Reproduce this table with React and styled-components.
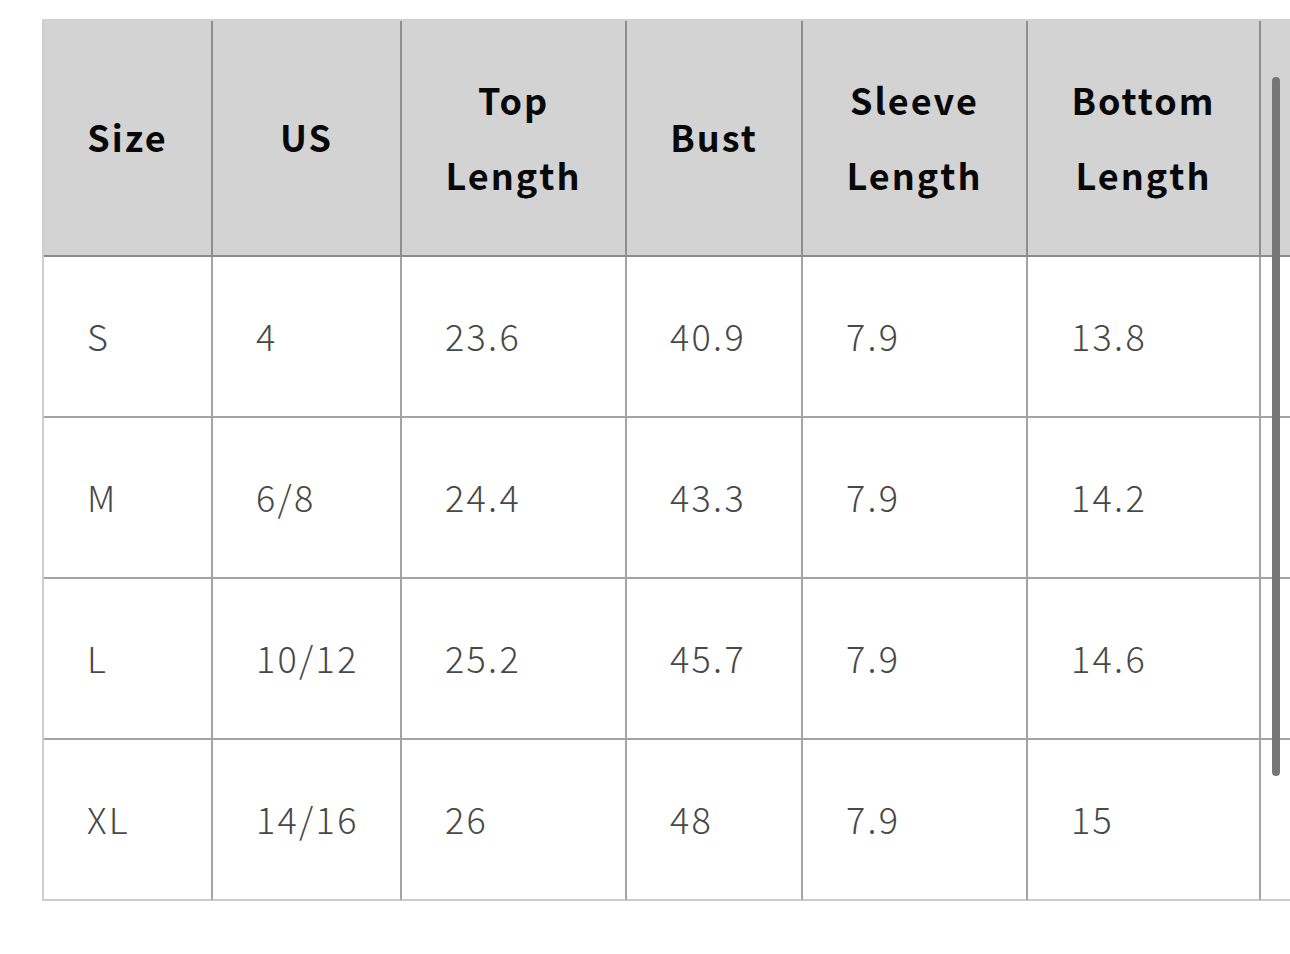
import styled, {createGlobalStyle} from 'styled-components';

const GlobalStyle = createGlobalStyle`
  html, body {
    margin: 0;
    padding: 0;
    background: #fff;
  }
  body {
    font-family: "Noto Sans CJK SC", "Noto Sans", sans-serif;
  }
`;

const columns = [
  {key: 'size', label: ['Size'], width: 169},
  {key: 'us', label: ['US'], width: 189},
  {key: 'top', label: ['Top', 'Length'], width: 225},
  {key: 'bust', label: ['Bust'], width: 176},
  {key: 'sleeve', label: ['Sleeve', 'Length'], width: 225},
  {key: 'bottom', label: ['Bottom', 'Length'], width: 233},
  {key: 'extra', label: [''], width: 220},
];

const rows = [
  ['S', '4', '23.6', '40.9', '7.9', '13.8', ''],
  ['M', '6/8', '24.4', '43.3', '7.9', '14.2', ''],
  ['L', '10/12', '25.2', '45.7', '7.9', '14.6', ''],
  ['XL', '14/16', '26', '48', '7.9', '15', ''],
];

function App() {
  return (
    <>
      <GlobalStyle />
      <Page>
        <Viewport>
          <Table>
            <colgroup>
              {columns.map(col => (
                <col key={col.key} style={{width: col.width}} />
              ))}
            </colgroup>
            <thead>
              <tr>
                {columns.map(col => (
                  <HeadCell key={col.key}>
                    {col.label.map(line => (
                      <HeadLine key={line}>{line}</HeadLine>
                    ))}
                  </HeadCell>
                ))}
              </tr>
            </thead>
            <tbody>
              {rows.map((row, i) => (
                <tr key={row[0]}>
                  {row.map((value, j) => (
                    <Cell key={j} $last={i === rows.length - 1}>
                      {value}
                    </Cell>
                  ))}
                </tr>
              ))}
            </tbody>
          </Table>
        </Viewport>
        <ScrollThumb />
      </Page>
    </>
  );
}

const Page = styled.div`
  position: relative;
  width: 1290px;
  height: 954px;
  overflow: hidden;
  background: #fff;
`;

const Viewport = styled.div`
  padding: 19px 0 0 42px;
`;

const Table = styled.table`
  table-layout: fixed;
  width: 1439px;
  border-collapse: separate;
  border-spacing: 0;
  border-left: 2px solid #cdcdcd;
  border-top: 2px solid #d2d2d2;
`;

const HeadCell = styled.th`
  box-sizing: border-box;
  height: 236px;
  padding: 0 0 3px;
  background: #d3d3d3;
  border-right: 2px solid #8e8e8e;
  border-bottom: 2px solid #8a8a8a;
  text-align: center;
  vertical-align: middle;
  color: #080808;
  font-size: 36px;
  font-weight: 700;
  letter-spacing: 2px;
`;

const HeadLine = styled.div`
  line-height: 75px;
`;

const Cell = styled.td`
  box-sizing: border-box;
  height: 161px;
  padding: 0 0 4px 43px;
  border-right: 2px solid #a4a4a4;
  border-bottom: 2px solid ${props => (props.$last ? '#cdcdcd' : '#a4a4a4')};
  vertical-align: middle;
  color: #484848;
  font-size: 36px;
  font-weight: 300;
  letter-spacing: 2.3px;
`;

const ScrollThumb = styled.div`
  position: absolute;
  left: 1272px;
  top: 77px;
  width: 8px;
  height: 699px;
  border-radius: 4px;
  background: #767676;
`;

export default App;
